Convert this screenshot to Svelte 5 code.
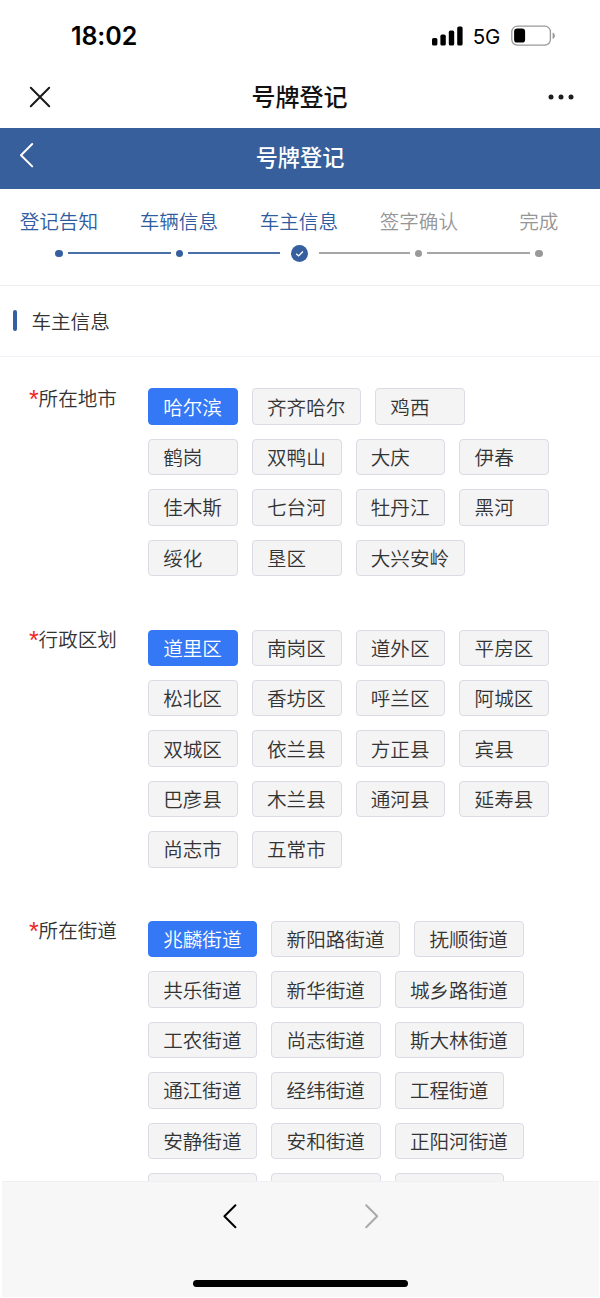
<script lang="ts">
  interface Option {
    name: string;
    partial?: boolean;
  }

  interface Group {
    label: string;
    selected: string;
    options: Option[];
  }

  const toOptions = (names: string): Option[] => names.split(' ').map((name) => ({ name }));

  const steps = [
    { title: '登记告知', state: 'done' },
    { title: '车辆信息', state: 'done' },
    { title: '车主信息', state: 'current' },
    { title: '签字确认', state: 'todo' },
    { title: '完成', state: 'todo' }
  ];

  let groups: Group[] = $state([
    {
      label: '所在地市',
      selected: '哈尔滨',
      options: toOptions('哈尔滨 齐齐哈尔 鸡西 鹤岗 双鸭山 大庆 伊春 佳木斯 七台河 牡丹江 黑河 绥化 垦区 大兴安岭')
    },
    {
      label: '行政区划',
      selected: '道里区',
      options: toOptions('道里区 南岗区 道外区 平房区 松北区 香坊区 呼兰区 阿城区 双城区 依兰县 方正县 宾县 巴彦县 木兰县 通河县 延寿县 尚志市 五常市')
    },
    {
      label: '所在街道',
      selected: '兆麟街道',
      options: [
        ...toOptions('兆麟街道 新阳路街道 抚顺街道 共乐街道 新华街道 城乡路街道 工农街道 尚志街道 斯大林街道 通江街道 经纬街道 工程街道 安静街道 安和街道 正阳河街道'),
        { name: '', partial: true },
        { name: '', partial: true },
        { name: '', partial: true }
      ]
    }
  ]);

  function select(group: Group, option: Option) {
    if (option.name) group.selected = option.name;
  }
</script>

<div class="screen">
  <div class="status">
    <span class="time">18:02</span>
    <div class="indicators">
      <svg width="32" height="20" viewBox="0 0 32 20">
        <rect x="0" y="12" width="5.4" height="7.5" rx="1.6" />
        <rect x="8.4" y="8.6" width="5.4" height="10.9" rx="1.6" />
        <rect x="16.8" y="4.6" width="5.4" height="14.9" rx="1.6" />
        <rect x="25.2" y="0.4" width="5.4" height="19.1" rx="1.6" />
      </svg>
      <span class="network">5G</span>
      <svg class="battery" width="45" height="22" viewBox="0 0 45 22">
        <rect x="0.8" y="1.2" width="38.6" height="19" rx="5.6" fill="none" stroke="#999" stroke-width="1.3" />
        <rect x="3.1" y="3.6" width="11" height="14" rx="3.2" />
        <path d="M41.6 7.6c3 .8 3 5.6 0 6.4z" fill="#999" />
      </svg>
    </div>
  </div>

  <div class="titlebar">
    <svg width="22" height="22" viewBox="0 0 22 22">
      <path d="M1.8 1.8 20.2 20.2M20.2 1.8 1.8 20.2" fill="none" stroke="#1a1a1a" stroke-width="2" stroke-linecap="round" />
    </svg>
    <h1>号牌登记</h1>
    <svg width="26" height="6" viewBox="0 0 26 6" fill="#1e1e1e">
      <circle cx="3" cy="3" r="2.5" />
      <circle cx="13" cy="3" r="2.5" />
      <circle cx="23" cy="3" r="2.5" />
    </svg>
  </div>

  <header>
    <svg width="16" height="26" viewBox="0 0 16 26">
      <path d="M13.2 2 2 13.2 13.2 24.4" fill="none" stroke="#fff" stroke-width="2" stroke-linecap="round" stroke-linejoin="round" />
    </svg>
    <h2>号牌登记</h2>
  </header>

  <section class="steps">
    <div class="titles">
      {#each steps as step}
        <span class={step.state}>{step.title}</span>
      {/each}
    </div>
    <div class="track">
      {#each steps as step, i}
        {#if i > 0}
          <i class="line {step.state}"></i>
        {/if}
        {#if step.state === 'current'}
          <svg class="check" width="17" height="17" viewBox="0 0 17 17">
            <circle cx="8.5" cy="8.5" r="8.5" fill="#355f9e" />
            <path d="M5.2 8.7 7.6 10.9 11.9 6.6" fill="none" stroke="#fff" stroke-width="1.4" />
          </svg>
        {:else}
          <i class="dot {step.state}"></i>
        {/if}
      {/each}
    </div>
  </section>

  <div class="section-title">
    <i></i>
    <h3>车主信息</h3>
  </div>

  <main>
    {#each groups as group}
      <div class="group">
        <div class="label"><em>*</em>{group.label}</div>
        <div class="options">
          {#each group.options as option}
            <button
              class:active={option.name !== '' && option.name === group.selected}
              class:partial={option.partial}
              onclick={() => select(group, option)}>{option.name}</button>
          {/each}
        </div>
      </div>
    {/each}
  </main>

  <footer>
    <div class="nav">
      <svg width="16" height="26" viewBox="0 0 16 26">
        <path d="M13.4 2.2 2.4 13.2 13.4 24.2" fill="none" stroke="#000" stroke-width="2" stroke-linecap="round" stroke-linejoin="round" />
      </svg>
      <svg width="16" height="26" viewBox="0 0 16 26">
        <path d="M2.2 2.2 13.2 13.2 2.2 24.2" fill="none" stroke="#aaa" stroke-width="2" stroke-linecap="round" stroke-linejoin="round" />
      </svg>
    </div>
    <div class="home"></div>
  </footer>
</div>

<style>
  :global(body) {
    margin: 0;
    background: #fff;
  }

  .screen {
    display: flex;
    flex-direction: column;
    width: 600px;
    height: 1298px;
    overflow: hidden;
    background: #fff;
    color: #333;
    font-family: 'Noto Sans CJK SC', sans-serif;
    font-size: 19.6px;
    font-weight: 350;
  }

  h1, h2, h3 {
    margin: 0;
  }

  svg {
    display: block;
    flex: none;
  }

  .status {
    display: flex;
    flex: none;
    justify-content: space-between;
    align-items: center;
    box-sizing: border-box;
    height: 72px;
    padding: 0 44px 0 71px;
    color: #000;
    font-family: Inter, sans-serif;
  }

  .time {
    font-size: 25px;
    font-weight: 600;
    letter-spacing: -0.1px;
  }

  .indicators {
    display: flex;
    align-items: center;
  }

  .network {
    margin: 0 11px 0 9px;
    font-family: Inter, sans-serif;
    font-size: 20.5px;
    font-weight: 400;
    letter-spacing: -0.2px;
  }

  .titlebar {
    display: flex;
    flex: none;
    justify-content: space-between;
    align-items: center;
    box-sizing: border-box;
    height: 55.5px;
    padding: 0 26px 5.5px 29px;
  }

  .titlebar h1 {
    margin-bottom: 2px;
    color: #111;
    font-size: 24px;
    font-weight: 500;
    line-height: 36px;
  }

  header {
    display: grid;
    flex: none;
    grid-template-columns: 40px 1fr 40px;
    align-items: center;
    box-sizing: border-box;
    height: 61.9px;
    padding: 0 19px;
    background: #375f9b;
    color: #fff;
  }

  header svg {
    margin-bottom: 7px;
  }

  header h2 {
    margin-bottom: 5px;
    font-size: 22.2px;
    font-weight: 500;
    line-height: 32px;
    text-align: center;
  }

  .steps {
    flex: none;
    box-sizing: border-box;
    height: 96.6px;
    padding-top: 17.6px;
    border-bottom: 1px solid #ededf0;
  }

  .titles {
    display: grid;
    grid-template-columns: repeat(5, 120px);
    margin-left: -1.2px;
    line-height: 28px;
    text-align: center;
  }

  .titles .done,
  .titles .current {
    color: #2f5c9f;
  }

  .titles .todo {
    color: #969696;
  }

  .track {
    display: flex;
    align-items: center;
    height: 17px;
    margin: 10px 57px 0 55px;
  }

  .dot {
    flex: none;
    width: 7.6px;
    height: 7.6px;
    border-radius: 50%;
  }

  .line {
    flex: 1;
    height: 2px;
    margin: 0 5px;
  }

  .check {
    margin: 0 6px;
  }

  .done,
  .line.current {
    --mark: #4a70aa;
  }

  .dot.done {
    --mark: #355f9e;
  }

  .todo {
    --mark: #a6a6a6;
  }

  .dot.todo {
    --mark: #999;
  }

  .dot,
  .line {
    background: var(--mark);
  }

  .line.current,
  .check + .line {
    flex: none;
    width: 91.3px;
  }

  .section-title {
    display: flex;
    flex: none;
    align-items: center;
    box-sizing: border-box;
    height: 71px;
    padding-left: 13px;
    border-bottom: 1px solid #f1f2f8;
  }

  .section-title i {
    width: 4px;
    height: 21px;
    border-radius: 2px;
    background: #355f9e;
  }

  .section-title h3 {
    margin-left: 14.4px;
    font-size: 19.6px;
    font-weight: inherit;
    line-height: 28px;
  }

  main {
    display: flex;
    flex: 1;
    flex-direction: column;
    gap: 53.5px;
    min-height: 0;
    padding-top: 31.5px;
    overflow: hidden;
  }

  .group {
    display: flex;
    flex: none;
  }

  .label {
    display: flex;
    width: 119px;
    padding-left: 29px;
    margin-top: -4.6px;
    line-height: 28px;
  }

  .label em {
    width: 9.6px;
    color: #f0281e;
    font-family: 'Liberation Sans', sans-serif;
    font-size: 25px;
    font-style: normal;
    line-height: 30px;
  }

  .options {
    display: flex;
    flex-wrap: wrap;
    gap: 14px;
    width: 412px;
  }

  button {
    box-sizing: border-box;
    min-width: 89.8px;
    height: 36.4px;
    padding: 0 14.8px 0 14.2px;
    border: 1px solid #d9dce4;
    border-radius: 4px;
    background: #f4f4f4;
    color: #333;
    font: inherit;
    line-height: 34px;
    text-align: left;
    white-space: nowrap;
  }

  button.active {
    border-color: #3478f6;
    background: #3478f6;
    color: #fff;
  }

  button.partial {
    width: 109.4px;
  }

  footer {
    display: flex;
    flex: none;
    flex-direction: column;
    justify-content: space-between;
    align-items: center;
    box-sizing: border-box;
    height: 116px;
    margin: 0 1px 1px 2px;
    padding: 21px 0 10px;
    border-top: 1px solid #f0f0f0;
    background: #f7f7f7;
  }

  .nav {
    display: flex;
    gap: 126px;
  }

  .home {
    width: 215px;
    height: 7px;
    border-radius: 4px;
    background: #000;
  }
</style>
